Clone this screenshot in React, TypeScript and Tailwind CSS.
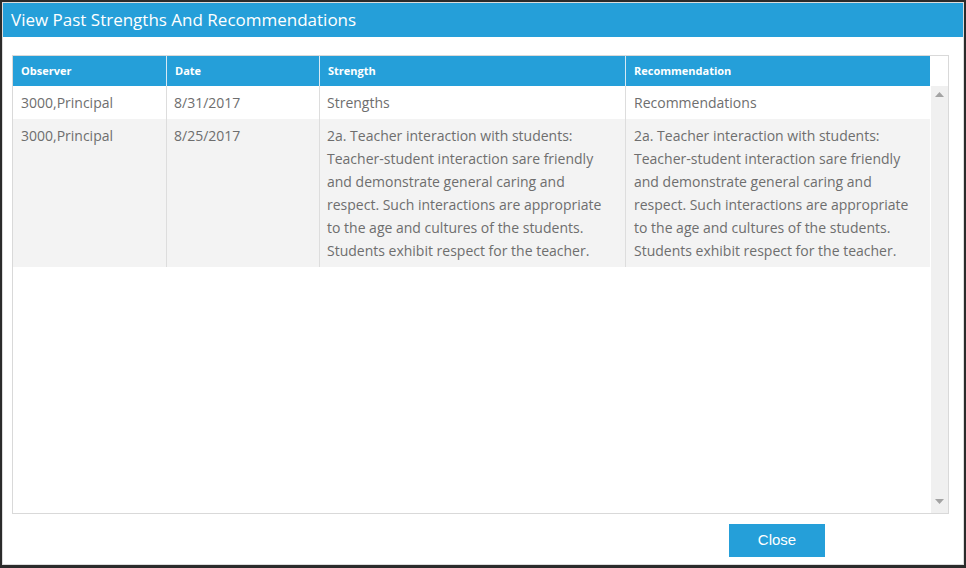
import React from "react";

type Row = {
  observer: string;
  date: string;
  strength: string[];
  recommendation: string[];
};

const longText = [
  "2a. Teacher interaction with students:",
  "Teacher-student interaction sare friendly",
  "and demonstrate general caring and",
  "respect. Such interactions are appropriate",
  "to the age and cultures of the students.",
  "Students exhibit respect for the teacher.",
];

const rows: Row[] = [
  { observer: "3000,Principal", date: "8/31/2017", strength: ["Strengths"], recommendation: ["Recommendations"] },
  { observer: "3000,Principal", date: "8/25/2017", strength: longText, recommendation: longText },
];

const headers = ["Observer", "Date", "Strength", "Recommendation"];
const widths = ["w-[154px]", "w-[153px]", "w-[306px]", "w-[304px]"];

function Lines({ lines }: { lines: string[] }) {
  return (
    <>
      {lines.map((line, i) => (
        <span key={i} className="block whitespace-nowrap">
          {line}
        </span>
      ))}
    </>
  );
}

export default function App() {
  return (
    <div
      className="h-[568px] w-[966px] overflow-hidden bg-[#2b2b2b] p-[2px]"
      style={{ fontFamily: '"Open Sans", "Noto Sans", sans-serif' }}
    >
      <div className="flex h-[563px] w-[962px] flex-col border border-[#dcdcdc] bg-white">
        <div className="flex h-[34px] shrink-0 items-center bg-[#259fd9] pl-[8px] text-[17px] text-white">
          View Past Strengths And Recommendations
        </div>

        <div className="ml-[9px] mt-[18px] flex h-[459px] w-[937px] flex-col border border-[#d9d9d9]">
          <div className="flex h-[30px] shrink-0">
            {headers.map((h, i) => (
              <div
                key={h}
                className={`${widths[i]} flex items-center bg-[#259fd9] pl-[8px] text-[11px] font-bold text-white ${
                  i < 3 ? "border-r border-[#d6e9f4]" : ""
                }`}
              >
                {h}
              </div>
            ))}
            <div className="flex-1 bg-white" />
          </div>

          <div className="flex min-h-0 flex-1">
            <div className="w-[917px]">
              {rows.map((row, r) => (
                <div key={r} className={`flex text-[14px] leading-[23px] text-[#6e6e6e] ${r % 2 ? "bg-[#f3f3f3]" : "bg-white"}`}>
                  <div className="w-[154px] border-r border-[#dddddd] px-[8px] py-[5px]">{row.observer}</div>
                  <div className="w-[153px] border-r border-[#dddddd] px-[7px] py-[5px]">{row.date}</div>
                  <div className="w-[306px] border-r border-[#dddddd] px-[7px] py-[5px]">
                    <Lines lines={row.strength} />
                  </div>
                  <div className="w-[304px] px-[8px] py-[5px]">
                    <Lines lines={row.recommendation} />
                  </div>
                </div>
              ))}
            </div>
            <div className="ml-[1px] flex flex-1 flex-col items-center justify-between bg-[#f0f0f0] py-[5px]">
              <svg width="9" height="5" viewBox="0 0 9 5" className="mt-[1px]">
                <polygon points="4.5,0 9,5 0,5" fill="#a3a3a3" />
              </svg>
              <svg width="9" height="5" viewBox="0 0 9 5" className="mb-[4px]">
                <polygon points="0,0 9,0 4.5,5" fill="#a3a3a3" />
              </svg>
            </div>
          </div>
        </div>

        <div className="mt-[10px] flex justify-end pr-[138px]">
          <button
            className="h-[33px] w-[96px] bg-[#259fd9] text-[15px] text-white"
            style={{ fontFamily: '"Liberation Sans", Arial, sans-serif' }}
          >
            Close
          </button>
        </div>
      </div>
    </div>
  );
}
